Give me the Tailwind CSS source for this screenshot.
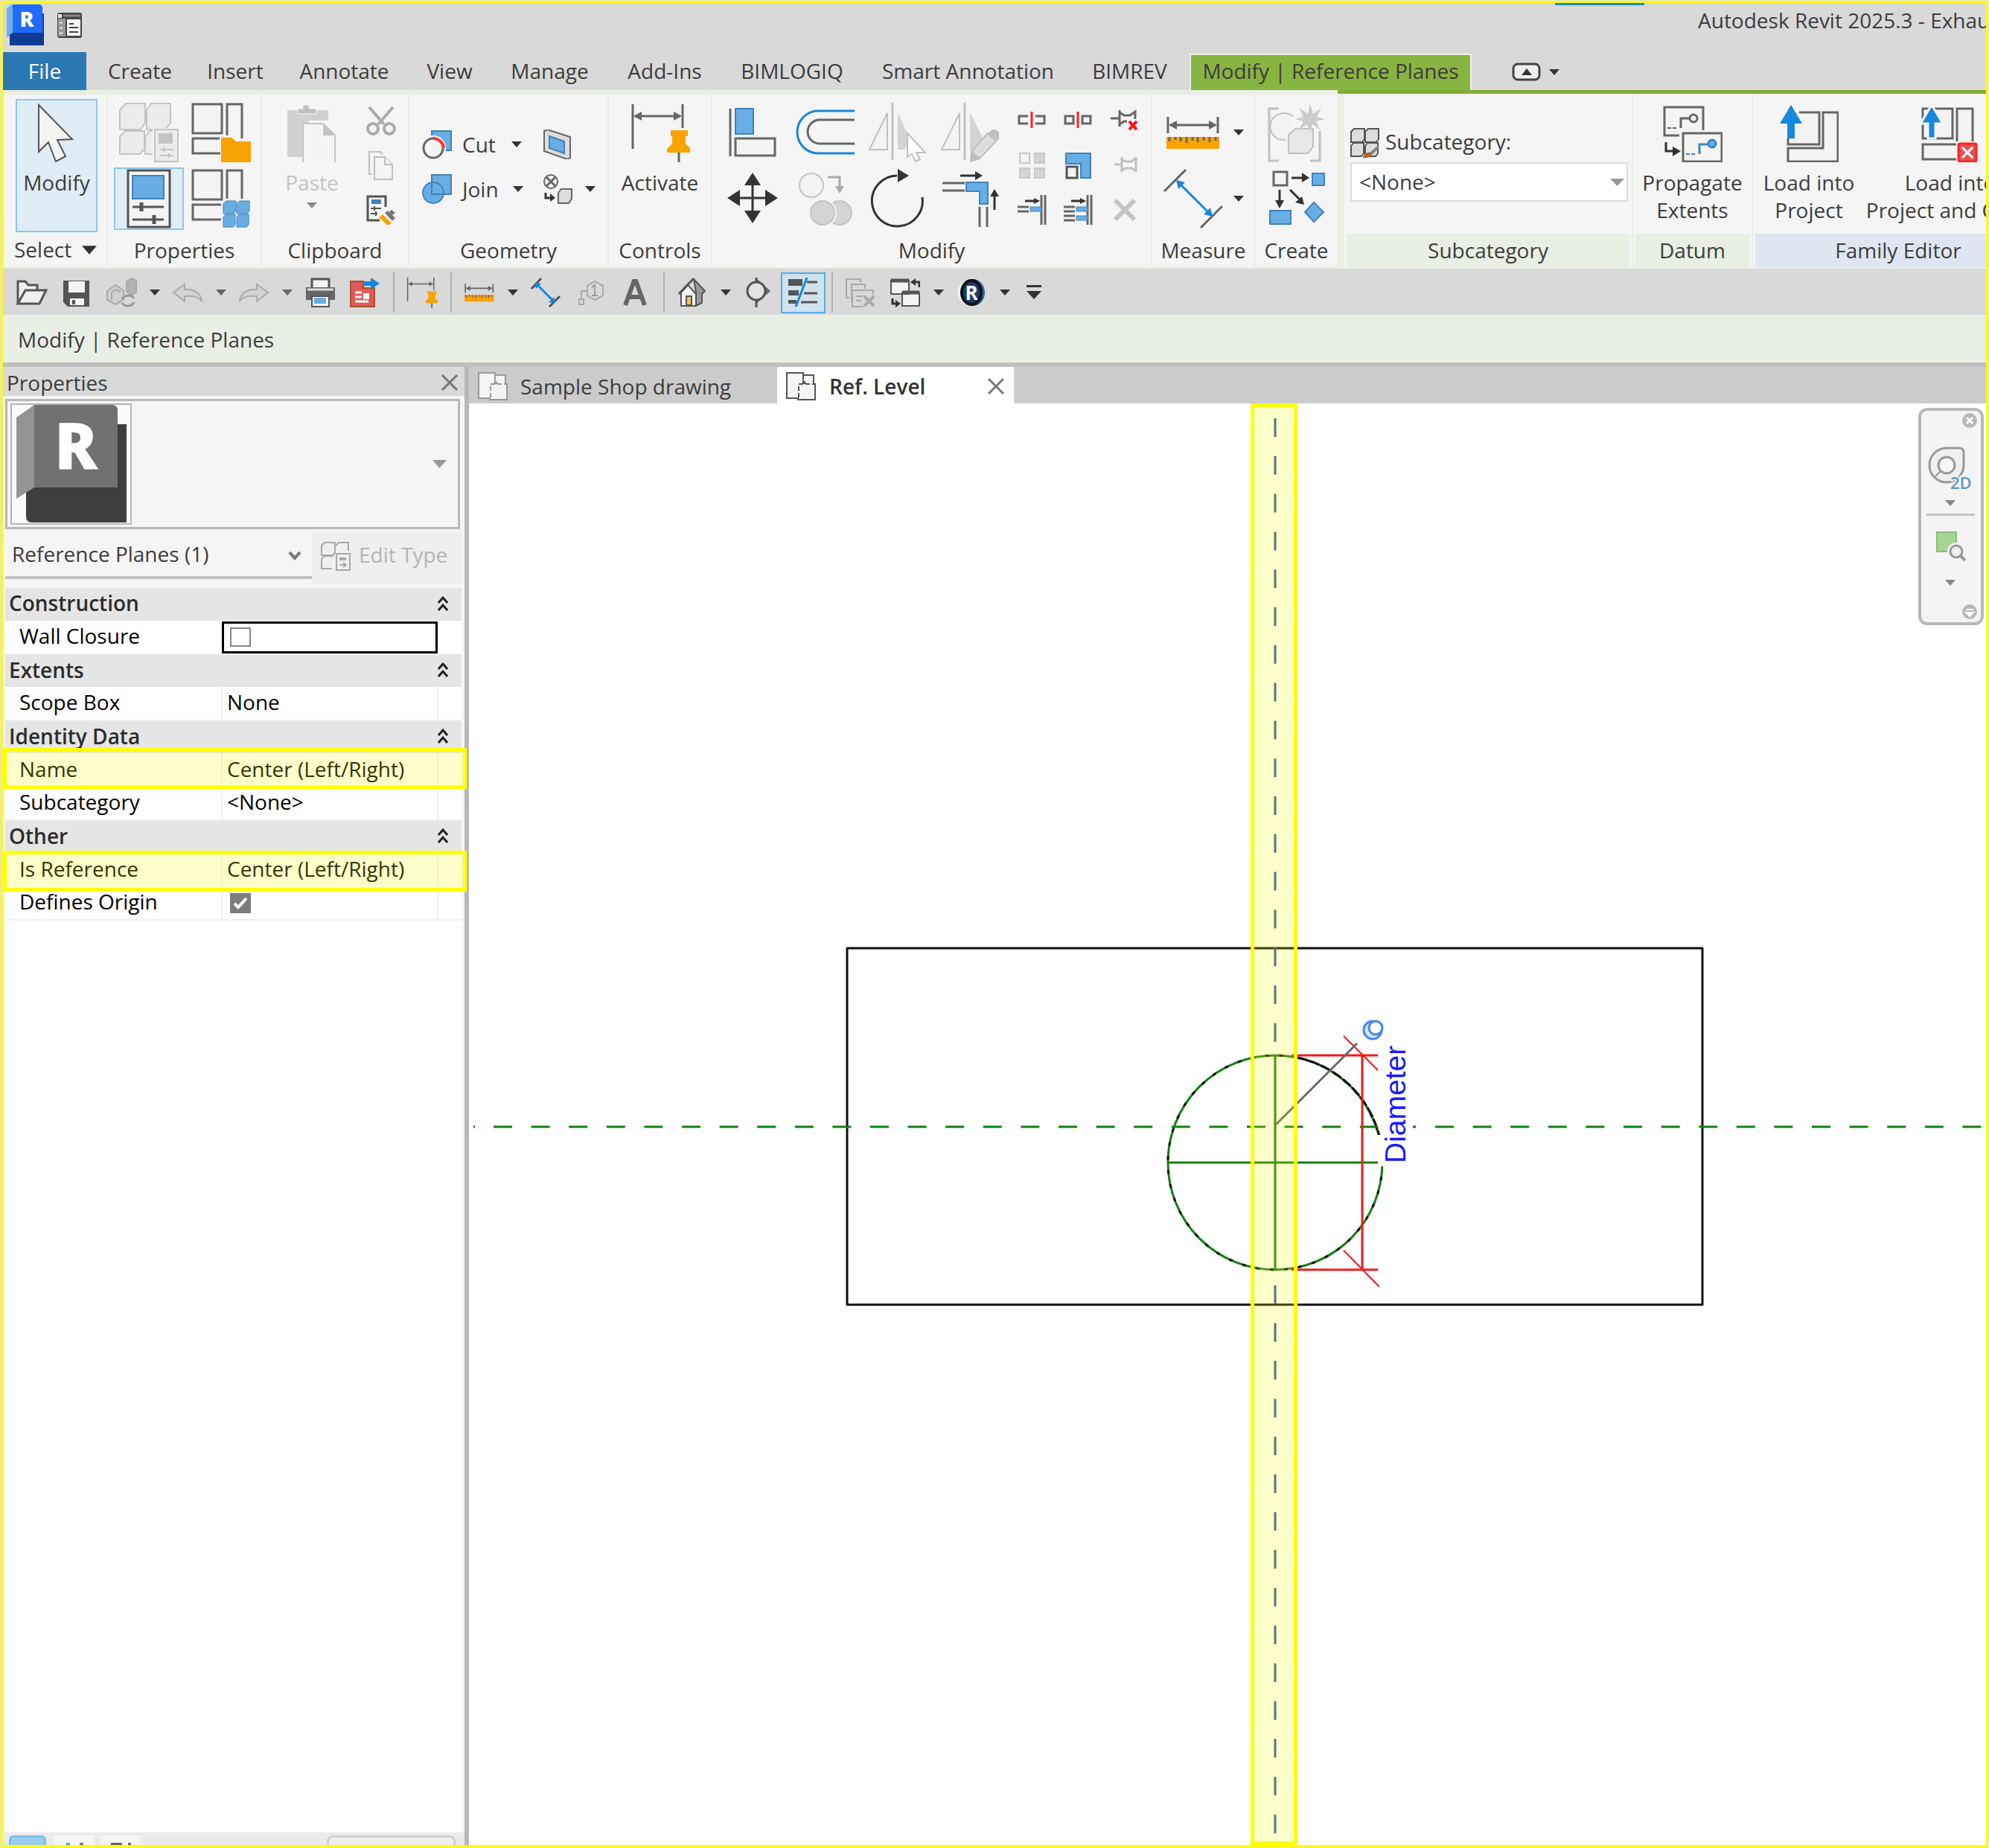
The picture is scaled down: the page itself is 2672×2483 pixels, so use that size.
<!DOCTYPE html>
<html lang="en">
<head>
    <meta charset="UTF-8">
    <meta name="viewport" content="width=device-width, initial-scale=1.0">
    <title>Autodesk Revit 2025.3</title>
    <script src="https://cdn.jsdelivr.net/npm/@tailwindcss/browser@4"></script>
</head>
<body class="bg-[#e0e0e0] text-[28px] leading-[37px] text-[#3c3c3c] font-['Open_Sans','Noto_Sans',sans-serif]">

    <!-- Shared symbols -->
    <svg class="hidden" aria-hidden="true">
        <symbol id="caret" viewBox="0 0 14 8"><path d="M0 0h14L7 8z" fill="currentColor"/></symbol>
        <symbol id="collapse" viewBox="0 0 14 22"><path d="M1 10l6-7 6 7M1 20l6-7 6 7" fill="none" stroke="#222" stroke-width="3"/></symbol>
        <symbol id="close" viewBox="0 0 24 24"><path d="M2 2l20 20M22 2L2 22" fill="none" stroke="#777" stroke-width="3"/></symbol>
        <symbol id="sheet" viewBox="0 0 40 40">
            <path d="M1 2h22v34H1z" fill="#f4f4f2" stroke="currentColor" stroke-width="2"/>
            <path d="M16 38V17h7V5h14v12h2v21z" fill="#f4f4f2"/>
            <path d="M23 5h14v12h2v21H16v-3M23 5v7" fill="none" stroke="currentColor" stroke-width="2"/>
            <path d="M17 35V17h20" fill="none" stroke="currentColor" stroke-width="2" stroke-dasharray="6 3"/>
            <path d="M20 17l4-5 4 5z" fill="currentColor"/>
        </symbol>
        <symbol id="pinned-dim" viewBox="0 0 80 80">
            <path d="M3 2v60M70 2v32M6 18h60" fill="none" stroke="#666" stroke-width="3"/>
            <path d="M4 18l11-6v12zM69 18l-11-6v12z" fill="#666"/>
            <path d="M54 37h23v8h-3v10l7 7v5H49v-5l7-7V45h-2z" fill="#f8a300"/>
            <path d="M65 67v14" stroke="#666" stroke-width="3"/>
        </symbol>
        <symbol id="aligned-dim" viewBox="0 0 80 80">
            <path d="M1 30L30 1M50 79l29-29" stroke="#666" stroke-width="3"/>
            <path d="M20 18l44 44" stroke="#1787e0" stroke-width="3"/>
            <path d="M17 15l12 3-9 9zM66 64l-12-3 9-9z" fill="#1787e0"/>
        </symbol>
        <symbol id="ruler" viewBox="0 0 72 44">
            <path d="M2 1v22M69 1v22M5 12h60" stroke="#666" stroke-width="3"/>
            <path d="M3 12l11-6v12zM68 12l-11-6v12z" fill="#666"/>
            <path d="M0 28h71v16H0z" fill="#f8a300"/>
            <path d="M4 28v6M12 28v4M19 28v6M27 28v8M35 28v5M42 28v7M50 28v5M58 28v7M66 28v5" stroke="#666" stroke-width="3"/>
        </symbol>
        <symbol id="cubes" viewBox="0 0 40 40">
            <path d="M1 5l4-4h14v14l-3 4H1zM20 5l4-4h14v14l-3 4H20zM1 24l3-4h14v14l-3 4H1zM20 24l3-4h14v14l-3 4H20z"/>
        </symbol>
    </svg>

    <div class="p-px">
    <div class="flex min-h-[calc(100vh-2px)] flex-col border-[3px] border-[#ffff00]">

        <!-- Title bar -->
        <header class="flex h-[66px] overflow-hidden bg-[#d9d9d9]">
            <svg class="ml-[5px] mt-[2px] shrink-0" width="52" height="56" viewBox="0 0 52 56">
                <path d="M0 5l8-5v40l-8 4z" fill="#4f9fe0"/>
                <path d="M4 12h46v43H4z" fill="#0f3c92"/>
                <path d="M8 0h37l3 3v35H8z" fill="#1f6bff"/>
                <path d="M0 5l8-5v38l-8 5z" fill="#6db0e6"/>
                <text x="27" y="30" text-anchor="middle" font-size="28" font-weight="800" fill="#fff">R</text>
            </svg>
            <button class="ml-[14px] mt-[11px] h-[38px]" aria-label="Home">
                <svg width="38" height="38" viewBox="0 0 38 38">
                    <rect x="2" y="2" width="33" height="34" rx="3" fill="#444"/>
                    <path d="M3 10h10v24H3z" fill="#999"/>
                    <path d="M15 11h18v22H15z" fill="#f5f5f5"/>
                    <path d="M3 4h5v5H3z" fill="#d8eafa"/>
                    <path d="M10 6h23" stroke="#888" stroke-width="3"/>
                    <path d="M5 14h4v3H5zM5 21h4v3H5zM5 28h4v3H5z" fill="#ccc"/>
                    <path d="M18 17h6M18 22h12M18 28h12" stroke="#444" stroke-width="2"/>
                </svg>
            </button>
            <div class="ml-auto h-[3px] w-[120px] shrink-0 bg-[#1787e0]"></div>
            <h1 class="ml-[72px] mt-[5px] w-[387px] shrink-0 whitespace-nowrap">Autodesk Revit 2025.3 - Exhau</h1>
        </header>

        <!-- Ribbon tabs -->
        <nav class="flex h-[51px] items-stretch whitespace-nowrap bg-[#d9d9d9]">
            <button class="w-[112px] bg-[#2b78b3] text-white">File</button>
            <button class="ml-[5px] w-[134px]">Create</button>
            <button class="w-[122px]">Insert</button>
            <button class="w-[171px]">Annotate</button>
            <button class="w-[112px]">View</button>
            <button class="w-[157px]">Manage</button>
            <button class="w-[152px]">Add-Ins</button>
            <button class="w-[190px]">BIMLOGIQ</button>
            <button class="w-[283px]">Smart Annotation</button>
            <button class="w-[151px]">BIMREV</button>
            <button class="ml-[5px] mt-[2px] w-[379px] border-x-2 border-t-2 border-[#eef3e8] bg-[#88b441] pb-[4px]">Modify | Reference Planes</button>
            <button class="ml-[54px] flex items-center gap-[10px] pt-[2px] text-[#333]" aria-label="Minimize ribbon">
                <svg width="40" height="26" viewBox="0 0 40 26"><rect x="2" y="2" width="35" height="21" rx="6" fill="#eee" stroke="#444" stroke-width="3"/><path d="M13 17l7-9 7 9z" fill="#333"/></svg>
                <svg width="14" height="8"><use href="#caret"/></svg>
            </button>
        </nav>
        <div class="flex h-[6px] bg-[#e9efe3]">
            <div class="w-[1793px]"></div>
            <div class="mb-px flex-1 bg-[#7fae36]"></div>
        </div>

        <!-- Ribbon panels -->
        <section class="flex h-[234px] gap-[2px] overflow-hidden bg-[#e9efe3] pb-[2px] pl-[2px]">
            <div class="flex w-[137px] shrink-0 flex-col bg-[#f5f5f5]">
                <button class="ml-[15px] mt-[6px] flex h-[179px] w-[110px] flex-col items-center border-2 border-[#8cc8ee] bg-[#deedf6] pt-[3px]">
                    <svg width="80" height="80" viewBox="0 0 80 80"><path d="M16 5l45 46-20 1 11 22-13 7-10-26-13 13z" fill="#f4f4f2" stroke="#555" stroke-width="2" transform="translate(0 -2)"/></svg>
                    <span class="mt-[9px]">Modify</span>
                </button>
                <button class="flex h-[47px] items-center gap-[14px] pl-[13px]">Select <svg class="text-[#333]" width="20" height="12"><use href="#caret"/></svg></button>
            </div>

            <div class="flex w-[205px] shrink-0 flex-col bg-[#f5f5f5]">
                <div class="grid h-[187px] grid-cols-[94px_80px] content-start justify-items-center gap-x-[10px] gap-y-[5px] pl-[8px] pt-[9px]">
                    <button class="h-[84px]" aria-label="Type Properties">
                        <svg width="80" height="80" viewBox="0 0 80 80" fill="#ececec" stroke="#c4c4c4" stroke-width="2">
                            <path d="M1 10l8-9h26v26l-6 9H1zM37 10l6-9h26v26l-7 9H37zM1 46l7-8h26v24l-6 7H1zM35 46l6-8h24v24l-6 7H35z"/>
                            <path d="M45 34h35v46H45z" fill="#f5f5f5" stroke="none"/>
                            <path d="M48 36h31v43H48z"/>
                            <path d="M53 41h19v14H53z" fill="#c4c4c4" stroke="none"/>
                            <path d="M55 63h18M60 60v6M55 71h18M67 68v6"/>
                        </svg>
                    </button>
                    <button class="h-[84px]" aria-label="Family Category">
                        <svg width="80" height="80" viewBox="0 0 80 80" fill="#f4f4f2" stroke="#666" stroke-width="3">
                            <path d="M2 2h39v39H2zM48 44V2h20v46M38 48H2v20h37"/>
                            <path d="M40 47h14l6 5h20v28H40z" fill="#f8a300" stroke="none"/>
                        </svg>
                    </button>
                    <button class="flex h-[84px] w-[94px] items-center justify-center border-2 border-[#8cc8ee] bg-[#deedf6]" aria-label="Properties">
                        <svg width="60" height="80" viewBox="0 0 60 80">
                            <path d="M2 2h56v76H2z" fill="#f4f4f2" stroke="#555" stroke-width="3"/>
                            <path d="M8 9h42v31H8z" fill="#68aee5" stroke="#3f83bd" stroke-width="2"/>
                            <path d="M8 51h42M8 68h42" stroke="#555" stroke-width="3"/>
                            <path d="M20 45v12M37 62v12" stroke="#555" stroke-width="5"/>
                        </svg>
                    </button>
                    <button class="h-[84px]" aria-label="Family Types">
                        <svg width="80" height="80" viewBox="0 0 80 80" fill="#f4f4f2" stroke="#666" stroke-width="3">
                            <path d="M2 2h39v39H2zM48 40V2h20v38M40 48H2v20h38"/>
                            <g fill="#68aee5" stroke="#3f83bd" stroke-width="1"><use href="#cubes" x="41" y="42" width="40" height="38"/></g>
                        </svg>
                    </button>
                </div>
                <div class="flex h-[45px] items-center justify-center">Properties</div>
            </div>

            <div class="flex w-[196px] shrink-0 flex-col bg-[#f5f5f5]">
                <div class="flex h-[187px] gap-[25px] pl-[19px]">
                    <button class="flex w-[96px] flex-col items-center pt-[11px] text-[#c4c4c4]">
                        <svg width="80" height="80" viewBox="0 0 80 80">
                            <path d="M7 10h55v14h-26v49H7z" fill="#d0d2d1"/>
                            <path d="M28 3h8v5h10v7H21V8h7z" fill="#c0c0c0" stroke="#f5f5f5"/>
                            <path d="M28 28h27l16 16v37H28z" fill="#f4f4f2" stroke="#c4c4c4" stroke-width="2"/>
                            <path d="M55 28v16h16z" fill="#c4c4c4"/>
                        </svg>
                        <span class="mt-[9px]">Paste</span>
                        <svg class="mt-[8px] text-[#888]" width="14" height="8"><use href="#caret"/></svg>
                    </button>
                    <div class="flex flex-col gap-[20px] pt-[15px]">
                        <button class="h-[40px]" aria-label="Cut to Clipboard"><svg width="40" height="40" viewBox="0 0 40 40" fill="none" stroke="#aaa" stroke-width="4"><path d="M4 2l20 23M36 2L16 25"/><circle cx="9" cy="31" r="7"/><circle cx="31" cy="31" r="7"/></svg></button>
                        <button class="h-[40px]" aria-label="Copy to Clipboard"><svg width="40" height="40" viewBox="0 0 40 40" fill="#f4f4f2" stroke="#c0c0c0" stroke-width="2"><path d="M8 32H4V2h15l3 3"/><path d="M11 9h14l10 10v20H11z"/><path d="M25 9v10h10"/></svg></button>
                        <button class="h-[40px]" aria-label="Match Type Properties"><svg width="40" height="40" viewBox="0 0 40 40"><path d="M26 16V2H2v32h16" fill="none" stroke="#555" stroke-width="3"/><path d="M7 6h13v6H7z" fill="#3f83bd"/><path d="M6 18h14M6 25h9M11 15v6M13 22v6" stroke="#555" stroke-width="2"/><path d="M22 26l12 12-5 3-12-11z" fill="#f8a300"/><path d="M25 24l4-3 1 2 4-3 5 4-4 3 4 4-4 4z" fill="#777"/></svg></button>
                    </div>
                </div>
                <div class="flex h-[45px] items-center justify-center">Clipboard</div>
            </div>

            <div class="flex w-[266px] shrink-0 flex-col bg-[#f5f5f5]">
                <div class="flex h-[187px] flex-col gap-[20px] pl-[17px] pt-[47px]">
                    <div class="flex h-[40px] items-center">
                        <button class="flex w-[120px] items-center gap-[14px]">
                            <svg width="40" height="40" viewBox="0 0 40 40"><path d="M13 2h26v26H13z" fill="#68aee5" stroke="#3f83bd" stroke-width="2"/><circle cx="15" cy="25" r="17" fill="#f5f5f5"/><circle cx="15" cy="25" r="13" fill="#f4f4f2" stroke="#666" stroke-width="3"/><path d="M15 12a14 14 0 0 1 14 13" fill="none" stroke="#f33" stroke-width="4"/></svg>
                            Cut
                        </button>
                        <button class="w-[42px]" aria-label="Cut options"><svg class="text-[#333]" width="14" height="8"><use href="#caret"/></svg></button>
                        <button aria-label="Wall Opening"><svg width="40" height="40" viewBox="0 0 40 40"><path d="M2 2l4-2 31 10v28l-4 2L2 29z" fill="#ddd" stroke="#666" stroke-width="2"/><path d="M9 9l20 7v16L9 25z" fill="#68aee5" stroke="#3f83bd" stroke-width="2"/></svg></button>
                    </div>
                    <div class="flex h-[40px] items-center">
                        <button class="flex w-[122px] items-center gap-[14px]">
                            <svg width="40" height="40" viewBox="0 0 40 40" fill="#68aee5" stroke="#3f83bd" stroke-width="2"><path d="M13 1h26v26H13z"/><circle cx="15" cy="25" r="14"/><path d="M13 12v15h16" fill="none"/></svg>
                            Join
                        </button>
                        <button class="w-[40px]" aria-label="Join options"><svg class="text-[#333]" width="14" height="8"><use href="#caret"/></svg></button>
                        <button aria-label="Paint"><svg width="40" height="40" viewBox="0 0 40 40"><circle cx="11" cy="10" r="9" fill="none" stroke="#666" stroke-width="2"/><path d="M5 4l12 12M17 4L5 16" stroke="#666" stroke-width="3"/><path d="M4 25v7h9" fill="none" stroke="#333" stroke-width="3"/><path d="M10 26l7 6-7 5z" fill="#333"/><path d="M21 25l4-5h14v13l-4 6H21z" fill="#ddd" stroke="#666" stroke-width="2"/></svg></button>
                        <button class="ml-[17px]" aria-label="Paint options"><svg class="text-[#333]" width="14" height="8"><use href="#caret"/></svg></button>
                    </div>
                </div>
                <div class="flex h-[45px] items-center justify-center">Geometry</div>
            </div>

            <div class="flex w-[137px] shrink-0 flex-col bg-[#f5f5f5]">
                <button class="flex h-[187px] flex-col items-center pt-[11px]">
                    <svg width="80" height="80"><use href="#pinned-dim"/></svg>
                    <span class="mt-[9px]">Activate</span>
                </button>
                <div class="flex h-[45px] items-center justify-center">Controls</div>
            </div>

            <div class="flex w-[589px] shrink-0 flex-col bg-[#f5f5f5]">
                <div class="flex h-[187px] gap-[24px] pl-[14px]">
                    <div class="grid grid-cols-[80px_80px_80px_80px] content-start gap-x-[17px] gap-y-[9px] pt-[11px]">
                        <button class="h-[80px]" aria-label="Align"><svg width="80" height="80" viewBox="0 0 80 80"><path d="M10 8v64" stroke="#666" stroke-width="3"/><path d="M17 8h24v34H17z" fill="#68aee5" stroke="#3f83bd" stroke-width="2"/><path d="M17 48h53v23H17z" fill="#f4f4f2" stroke="#666" stroke-width="3"/></svg></button>
                        <button class="h-[80px]" aria-label="Offset"><svg width="80" height="80" viewBox="0 0 80 80" fill="none" stroke-width="3"><path d="M80 11H31a28 28.500 0 0 0 0 57h49" stroke="#1787e0"/><path d="M80 23H33a16 16 0 0 0 0 32h47" stroke="#666"/></svg></button>
                        <button class="h-[80px]" aria-label="Mirror Pick Axis"><svg width="80" height="80" viewBox="0 0 80 80" stroke="#c0c0c0" stroke-width="2"><path d="M3 63l24-49v49z" fill="#f4f4f2"/><path d="M34 0v77" stroke-width="3"/><path d="M41 13l17 38-8 12h-9z" fill="#d4d4d4" stroke="none"/><path d="M54 41l24 26-12 0 5 9-6 3-5-10-6 4z" fill="#fff"/></svg></button>
                        <button class="h-[80px]" aria-label="Mirror Draw Axis"><svg width="80" height="80" viewBox="0 0 80 80" stroke="#c0c0c0" stroke-width="2"><path d="M3 63l24-49v49z" fill="#f4f4f2"/><path d="M34 0v77" stroke-width="3"/><path d="M41 13l17 34-14 16h-3z" fill="#d4d4d4" stroke="none"/><path d="M43 78l2-15 20-22 11 11-21 22z" fill="#ddd"/><path d="M67 41a7 7 0 1 1 10 9zM42 79l1-14 11 10z" fill="#c0c0c0"/></svg></button>
                        <button class="h-[80px]" aria-label="Move"><svg width="80" height="80" viewBox="0 0 80 80" fill="#333"><path d="M40 15v46M16 39h48" stroke="#333" stroke-width="3"/><path d="M40 5l11 17H29zM40 73l11-17H29zM6 39l17-11v22zM74 39L57 28v22z"/></svg></button>
                        <button class="h-[80px]" aria-label="Copy"><svg width="80" height="80" viewBox="0 0 80 80" fill="#d4d4d4" stroke="#c4c4c4" stroke-width="2"><circle cx="22" cy="22" r="16" fill="#f4f4f2"/><circle cx="60" cy="59" r="16"/><circle cx="37" cy="59" r="18" stroke="#f5f5f5"/><circle cx="37" cy="59" r="16"/><path d="M44 11h16v12" fill="none" stroke="#aaa" stroke-width="3"/><path d="M54 23h12l-6 10z" fill="#aaa" stroke="none"/></svg></button>
                        <button class="h-[80px]" aria-label="Rotate"><svg width="80" height="80" viewBox="0 0 80 80"><path d="M40 9A34 34 0 1 0 74 38" fill="none" stroke="#333" stroke-width="3"/><path d="M41 0l15 9-15 9z" fill="#333"/></svg></button>
                        <button class="h-[80px]" aria-label="Trim to Corner"><svg width="80" height="80" viewBox="0 0 80 80"><path d="M4 19h30M4 29h30M54 51v27M64 51v27" stroke="#666" stroke-width="3"/><path d="M36 18h29v29H54V30H36z" fill="#68aee5" stroke="#3f83bd" stroke-width="2"/><path d="M28 9h22M74 55V35" stroke="#333" stroke-width="3"/><path d="M48 3l10 6-10 6zM68 37l6-10 6 10z" fill="#333"/></svg></button>
                    </div>
                    <div class="grid grid-cols-[40px_40px_40px] content-start gap-x-[22px] gap-y-[20px] pt-[15px]">
                        <button class="h-[40px]" aria-label="Split Element"><svg width="40" height="40" viewBox="0 0 40 40"><path d="M15 14H3v10h12M25 14h12v10H25" fill="none" stroke="#666" stroke-width="3"/><path d="M20 8v22" stroke="#f22" stroke-width="3"/></svg></button>
                        <button class="h-[40px]" aria-label="Split with Gap"><svg width="40" height="40" viewBox="0 0 40 40"><path d="M3 14h11v10H3zM26 14h11v10H26z" fill="none" stroke="#666" stroke-width="3"/><path d="M20 8v22" stroke="#f22" stroke-width="3"/></svg></button>
                        <button class="h-[40px]" aria-label="Unpin"><svg width="40" height="40" viewBox="0 0 40 40"><path d="M2 17h11M14 6v22M14 9l6 4h8l7-5v10M14 25l6-4h4" fill="none" stroke="#666" stroke-width="3"/><path d="M27 21l10 11M37 21L27 32" stroke="#f11" stroke-width="4"/></svg></button>
                        <button class="h-[40px]" aria-label="Array"><svg width="40" height="40" viewBox="0 0 40 40" fill="#d4d4d4" stroke="#c8c8c8" stroke-width="2"><path d="M4 4h13v13H4z" fill="#f4f4f2"/><path d="M24 4h13v13H24zM4 24h13v13H4zM24 24h13v13H24z"/></svg></button>
                        <button class="h-[40px]" aria-label="Scale"><svg width="40" height="40" viewBox="0 0 40 40"><path d="M4 4h33v33H24V18H4z" fill="#68aee5" stroke="#3f83bd" stroke-width="2"/><path d="M5 22h14v15H5z" fill="#f4f4f2" stroke="#555" stroke-width="3"/></svg></button>
                        <button class="h-[40px]" aria-label="Pin"><svg width="40" height="40" viewBox="0 0 40 40"><path d="M7 19h9M17 9v20M17 12l5 3h8l6-4M17 27l5-3h8l6 3M36 9v20" fill="none" stroke="#c0c0c0" stroke-width="3"/></svg></button>
                        <button class="h-[40px]" aria-label="Trim Single"><svg width="40" height="40" viewBox="0 0 40 40"><path d="M1 16h15M1 22h15M33 0v40M38 0v40" stroke="#666" stroke-width="3"/><path d="M18 16h15v6H18z" fill="#68aee5" stroke="#3f83bd"/><path d="M11 8h14" stroke="#333" stroke-width="3"/><path d="M23 4l8 4-8 4z" fill="#333"/></svg></button>
                        <button class="h-[40px]" aria-label="Trim Multiple"><svg width="40" height="40" viewBox="0 0 40 40"><path d="M1 16h15M1 22h15M1 28h15M1 34h15M33 0v40M38 0v40" stroke="#666" stroke-width="3"/><path d="M18 16h15v6H18zM18 28h15v6H18z" fill="#68aee5" stroke="#3f83bd"/><path d="M11 8h14" stroke="#333" stroke-width="3"/><path d="M23 4l8 4-8 4z" fill="#333"/></svg></button>
                        <button class="h-[40px]" aria-label="Delete"><svg width="40" height="40" viewBox="0 0 40 40"><path d="M8 7l26 26M34 7L8 33" stroke="#c4c4c4" stroke-width="6"/></svg></button>
                    </div>
                </div>
                <div class="flex h-[45px] items-center justify-center">Modify</div>
            </div>

            <div class="flex w-[137px] shrink-0 flex-col bg-[#f5f5f5]">
                <div class="flex h-[187px] flex-col gap-[9px] pl-[15px] pt-[11px]">
                    <button class="flex h-[80px] items-center gap-[14px]" aria-label="Measure">
                        <svg width="80" height="44"><use href="#ruler"/></svg>
                        <svg class="text-[#333]" width="14" height="8"><use href="#caret"/></svg>
                    </button>
                    <button class="flex h-[80px] items-center gap-[14px]" aria-label="Aligned Dimension">
                        <svg width="80" height="80"><use href="#aligned-dim"/></svg>
                        <svg class="text-[#333]" width="14" height="8"><use href="#caret"/></svg>
                    </button>
                </div>
                <div class="flex h-[45px] items-center justify-center">Measure</div>
            </div>

            <div class="flex w-[109px] shrink-0 flex-col bg-[#f5f5f5]">
                <div class="flex h-[187px] flex-col items-center gap-[9px] pt-[11px]">
                    <button class="h-[80px]" aria-label="Create Group"><svg width="80" height="80" viewBox="0 0 80 80" fill="none" stroke="#c0c0c0" stroke-width="3"><path d="M16 8H3v70h13M58 78h13V38"/><path d="M35 18a19 18 0 1 0-10 32" stroke-width="2" fill="#f2f2f0"/><path d="M29 43l9-8h24v24l-7 9H29z" stroke-width="2" fill="#e8e8e8"/><path d="M58 1l4 14 11-8-6 12 11 3-12 3 6 12-11-8-3 12-4-12-11 7 6-11-12-3 12-3-6-12 12 8z" fill="#ccc" stroke="none"/></svg></button>
                    <button class="h-[80px]" aria-label="Create Similar"><svg width="80" height="80" viewBox="0 0 80 80"><path d="M9 4h18v18H9z" fill="#f4f4f2" stroke="#666" stroke-width="3"/><path d="M61 6h16v16H61zM4 56h28v18H4zM63 45l13 13-13 13-12-13z" fill="#68aee5" stroke="#3f83bd" stroke-width="2"/><path d="M33 12h16M17 28v16M31 28l14 14" stroke="#333" stroke-width="3"/><path d="M47 5l10 7-10 6zM11 42h12l-6 11zM50 48l-12-3 9-8z" fill="#333"/></svg></button>
                </div>
                <div class="flex h-[45px] items-center justify-center">Create</div>
            </div>

            <div class="ml-[8px] flex w-[386px] shrink-0 flex-col bg-[#f5f5f5]">
                <div class="h-[187px] pl-[8px] pt-[45px]">
                    <label for="subcategory" class="flex h-[46px] items-start gap-[7px]">
                        <svg width="40" height="40" viewBox="0 0 40 40"><g fill="#ddd" stroke="#555" stroke-width="2"><use href="#cubes" width="40" height="40"/></g><path d="M38 25L26 36" stroke="#888" stroke-width="4"/><path d="M17 40c1-7 8-8 12-7 0 5-6 8-12 7z" fill="#b5622c"/></svg>
                        Subcategory:
                    </label>
                    <div class="relative w-[373px]">
                        <select id="subcategory" class="h-[53px] w-full appearance-none border-2 border-[#dcdcdc] bg-white pl-[10px]"><option>&lt;None&gt;</option></select>
                        <svg class="pointer-events-none absolute right-[5px] top-[22px] text-[#999]" width="19" height="10" viewBox="0 0 14 8" preserveAspectRatio="none"><path d="M0 0h14L7 8z" fill="currentColor"/></svg>
                    </div>
                </div>
                <div class="mx-[3px] flex h-[45px] items-center justify-center bg-[#e9efe3]">Subcategory</div>
            </div>

            <div class="flex w-[159px] shrink-0 flex-col bg-[#f5f5f5]">
                <button class="flex h-[187px] flex-col items-center pt-[11px]">
                    <svg width="80" height="80" viewBox="0 0 80 80" fill="#f4f4f2" stroke="#666" stroke-width="3"><path d="M22 44H2V6h52v31"/><path d="M27 41h52v38H27z"/><path d="M6 34h14" stroke-width="2" stroke-dasharray="5 2"/><path d="M24 34V21h12"/><circle cx="41" cy="21" r="5"/><path d="M31 69h13" stroke="#3f83bd" stroke-dasharray="5 2" stroke-width="2"/><path d="M49 69V56h12" fill="none" stroke="#3f83bd"/><circle cx="66" cy="55" r="5" fill="#68aee5" stroke="#3f83bd"/><path d="M4 53v12h10" stroke="#333" fill="none"/><path d="M13 59l11 6-11 7z" fill="#333" stroke="none"/></svg>
                    <span class="mt-[9px]">Propagate<br>Extents</span>
                </button>
                <div class="mx-[3px] flex h-[45px] items-center justify-center bg-[#e9efe3]">Datum</div>
            </div>

            <div class="flex w-[390px] shrink-0 flex-col bg-[#f5f5f5]">
                <div class="flex h-[187px]">
                    <button class="flex w-[150px] flex-col items-center pt-[11px]">
                        <svg width="80" height="80" viewBox="0 0 80 80" fill="#f4f4f2" stroke="#666" stroke-width="3"><path d="M27 13h27v43H12v-8"/><path d="M59 13h20v66H12V61h47z"/><path d="M16 3l15 25H21v20H11V28H1z" fill="#1787e0" stroke="none"/></svg>
                        <span class="mt-[9px]">Load into<br>Project</span>
                    </button>
                    <button class="flex w-[230px] flex-col items-center whitespace-nowrap pt-[11px]">
                        <svg width="80" height="80" viewBox="0 0 80 80" fill="#f4f4f2" stroke="#666" stroke-width="3"><path d="M3 8h40v40H3zM49 52V8h21v44M48 56H3v20h45"/><path d="M15 3l15 25H20v20H10V28H0z" fill="#1787e0" stroke="#f5f5f5"/><rect x="51" y="55" width="24" height="24" rx="2" fill="#e25555" stroke="#f22"/><path d="M56 60l14 14M70 60L56 74" stroke="#fff"/></svg>
                        <span class="mt-[9px]">Load into<br>Project and Close</span>
                    </button>
                </div>
                <div class="mx-[3px] flex h-[45px] items-center justify-center bg-[#dfe6f1]">Family Editor</div>
            </div>
        </section>

        <!-- Quick access toolbar -->
        <section class="flex h-[62px] items-center bg-[#d9d9d9] pl-[9px] pt-[2px] text-[#333]">
            <button class="flex w-[60px] justify-center" aria-label="Open"><svg width="42" height="40" viewBox="0 0 42 40" fill="#f0f0f0" stroke="#555" stroke-width="3"><path d="M2 35V5h10l4 5h12v7"/><path d="M2 35l10-18h28L31 35z"/></svg></button>
            <button class="flex w-[60px] justify-center" aria-label="Save"><svg width="40" height="40" viewBox="0 0 40 40"><path d="M2 4h35v35H8l-6-6z" fill="#555"/><path d="M9 5h22v15H9z" fill="#f4f4f2"/><path d="M11 28h19v9H11z" fill="#f4f4f2"/><path d="M14 30h4v6h-4z" fill="#555"/></svg></button>
            <button class="flex w-[60px] justify-center" aria-label="Synchronize"><svg width="42" height="40" viewBox="0 0 42 40" fill="#d0d0d0" stroke="#aaa" stroke-width="2"><path d="M2 18l11-8 11 7v13l-11 6-11-6z"/><path d="M8 30V20l6-4 6 3" /><path d="M28 5l7-4 6 3v16l-6 3-7-4z" fill="#b4b4b4"/><path d="M22 29a9 8 0 0 1 16-1M38 33a9 8 0 0 1-16 1" fill="none" stroke="#999" stroke-width="3"/></svg></button>
            <button class="flex w-[29px] justify-center" aria-label="Synchronize options"><svg width="14" height="8"><use href="#caret"/></svg></button>
            <button class="flex w-[60px] justify-center" aria-label="Undo"><svg width="42" height="40" viewBox="0 0 42 40"><path d="M2 20L17 9v7c14-1 22 6 23 15-6-6-12-7-23-6v7z" fill="#d4d4d4" stroke="#aaa" stroke-width="2"/></svg></button>
            <button class="flex w-[29px] justify-center text-[#666]" aria-label="Undo options"><svg width="14" height="8"><use href="#caret"/></svg></button>
            <button class="flex w-[60px] justify-center" aria-label="Redo"><svg width="42" height="40" viewBox="0 0 42 40"><path d="M40 20L25 9v7C11 15 3 22 2 31c6-6 12-7 23-6v7z" fill="#d4d4d4" stroke="#aaa" stroke-width="2"/></svg></button>
            <button class="flex w-[29px] justify-center text-[#666]" aria-label="Redo options"><svg width="14" height="8"><use href="#caret"/></svg></button>
            <button class="flex w-[60px] justify-center" aria-label="Print"><svg width="40" height="40" viewBox="0 0 40 40"><path d="M9 14V2h23v12" fill="#f4f4f2" stroke="#555" stroke-width="3"/><path d="M1 13h39v17H1z" fill="#666"/><path d="M3 16h35" stroke="#ddd" stroke-width="3"/><path d="M9 25h23v14H9z" fill="#f4f4f2" stroke="#555" stroke-width="2"/><path d="M12 27h16v8H12z" fill="#68aee5"/></svg></button>
            <button class="flex w-[60px] justify-center" aria-label="Export PDF"><svg width="40" height="40" viewBox="0 0 40 40"><path d="M1 5h17v9h15v25H1z" fill="#e05a55" stroke="#a5532f" stroke-width="2"/><path d="M7 20h9M7 26h9M7 32h18" stroke="#fff" stroke-width="3"/><path d="M18 21h8v8h-8z" fill="#fff"/><path d="M18 5h10V0l12 8-12 8v-5H18z" fill="#1787e0"/></svg></button>
            <div class="flex w-[17px] justify-center"><span class="h-[54px] w-[2px] bg-[#b0b0b0]"></span></div>
            <button class="flex w-[60px] justify-center" aria-label="Activate Dimensions"><svg width="42" height="42"><use href="#pinned-dim"/></svg></button>
            <div class="flex w-[17px] justify-center"><span class="h-[54px] w-[2px] bg-[#b0b0b0]"></span></div>
            <button class="flex w-[60px] justify-center" aria-label="Measure"><svg width="40" height="26"><use href="#ruler"/></svg></button>
            <button class="flex w-[29px] justify-center" aria-label="Measure options"><svg width="14" height="8"><use href="#caret"/></svg></button>
            <button class="flex w-[60px] justify-center" aria-label="Aligned Dimension"><svg width="42" height="40" viewBox="0 0 42 40"><path d="M2 15L15 1M26 39l14-14" stroke="#555" stroke-width="3"/><path d="M9 9l22 22" stroke="#1787e0" stroke-width="3"/><path d="M6 7l9 1-7 7zM34 34l-9-1 7-7z" fill="#1787e0"/></svg></button>
            <button class="flex w-[60px] justify-center" aria-label="Tag by Category"><svg width="36" height="36" viewBox="0 0 36 36" fill="none" stroke="#aaa" stroke-width="2"><path d="M14 16H6v10M3 27h6v7H3zM24 3l11 6v13l-11 6-10-6V9z"/><path d="M20 11l4-3v14M20 22h8" stroke="#999"/></svg></button>
            <button class="flex w-[60px] justify-center" aria-label="Text"><svg width="32" height="36" viewBox="0 0 32 36"><path d="M3 35L15 2h2l12 33M7 24h18" fill="none" stroke="#666" stroke-width="6"/></svg></button>
            <div class="flex w-[17px] justify-center"><span class="h-[54px] w-[2px] bg-[#b0b0b0]"></span></div>
            <button class="flex w-[60px] justify-center" aria-label="Default 3D View"><svg width="38" height="40" viewBox="0 0 38 40" stroke="#555" stroke-width="2"><path d="M21 2l15 16-4 4v12l-8 4V20z" fill="#999"/><path d="M4 38V20l9-10 11 12v16z" fill="#f4f4f2"/><path d="M1 22L20 2" fill="none" stroke-width="3"/><path d="M11 25h7v12h-7z" fill="#f8c060"/></svg></button>
            <button class="flex w-[29px] justify-center" aria-label="3D View options"><svg width="14" height="8"><use href="#caret"/></svg></button>
            <button class="flex w-[60px] justify-center" aria-label="Section"><svg width="36" height="40" viewBox="0 0 36 40"><path d="M15 1l19 17-19 17z" fill="#666"/><circle cx="15" cy="18" r="12" fill="#e4e4e4" stroke="#555" stroke-width="3"/><path d="M15 0v6M15 30v10" stroke="#555" stroke-width="3"/></svg></button>
            <button class="flex h-[55px] w-[60px] items-center justify-center border-2 border-[#55aae6] bg-[#d0e2ec]" aria-label="Thin Lines"><svg width="42" height="40" viewBox="0 0 42 40"><path d="M1 2h19v9H1zM1 17h14v7H1zM1 30h11v5H1z" fill="#555"/><path d="M26 6h14M22 21h18M18 33h22" stroke="#555" stroke-width="3"/><path d="M26 0L11 39" stroke="#1787e0" stroke-width="3"/></svg></button>
            <div class="flex w-[17px] justify-center"><span class="h-[54px] w-[2px] bg-[#b0b0b0]"></span></div>
            <button class="flex w-[60px] justify-center" aria-label="Close Inactive Views"><svg width="40" height="40" viewBox="0 0 40 40" fill="none" stroke="#aaa" stroke-width="2"><path d="M5 27H1V2h19v4M8 33V9h18v6M24 39H9V17h28v6M14 25h9M14 31h7"/><path d="M25 25l13 13M38 25L25 38" stroke-width="4"/></svg></button>
            <button class="flex w-[60px] justify-center" aria-label="Switch Windows"><svg width="40" height="40" viewBox="0 0 40 40" fill="#f4f4f2" stroke="#555" stroke-width="2"><path d="M1 4h24v18H1zM16 20h23v18H16z"/><path d="M1 4h24M16 20h23" stroke-width="5"/><path d="M39 13V6h-7M3 28v7h5" fill="none" stroke="#333" stroke-width="3"/><path d="M34 1v10l-7-5zM7 30v10l7-5z" fill="#333" stroke="none"/></svg></button>
            <button class="flex w-[29px] justify-center" aria-label="Switch Windows options"><svg width="14" height="8"><use href="#caret"/></svg></button>
            <button class="flex w-[60px] justify-center" aria-label="BIMREV"><svg width="40" height="40" viewBox="0 0 40 40"><circle cx="18" cy="20" r="17" fill="#f0f0f0"/><ellipse cx="22" cy="20" rx="16" ry="18" fill="#2d5ea0"/><ellipse cx="20" cy="20" rx="13" ry="16" fill="#1f3c70" stroke="#111" stroke-width="4"/><text x="20" y="30" text-anchor="middle" font-size="26" font-weight="700" fill="#fff">R</text></svg></button>
            <button class="flex w-[29px] justify-center" aria-label="BIMREV options"><svg width="14" height="8"><use href="#caret"/></svg></button>
            <button class="flex w-[50px] justify-center" aria-label="Customize toolbar"><svg width="22" height="20" viewBox="0 0 22 20"><path d="M1 0h20v3H1zM1 8h20L11 19z" fill="#333"/></svg></button>
        </section>

        <!-- Options bar -->
        <section class="flex h-[64px] items-center bg-[#e9efe5] pl-[20px] pt-[3px]">Modify | Reference Planes</section>
        <div class="h-[6px] bg-[#bfbfbf]"></div>

        <main class="flex flex-1">
            <!-- Properties palette -->
            <aside class="flex w-[626px] shrink-0 flex-col border-r-[6px] border-[#b8b8b8] bg-[#f5f5f5]">
                <div class="flex h-[39px] items-center justify-between bg-[#d9d9d9] pl-[5px] pr-[8px] pt-[3px]">
                    <h2>Properties</h2>
                    <button aria-label="Close palette"><svg width="24" height="24"><use href="#close"/></svg></button>
                </div>
                <button class="ml-[3px] mr-[6px] mt-[4px] flex h-[175px] items-center justify-between border-[3px] border-[#b8b8b8] pl-[4px] pr-[15px]" aria-label="Type selector">
                    <svg width="163" height="163" viewBox="0 0 163 163">
                        <path d="M1 1h161v161H1z" fill="#fafafa" stroke="#b5b5b5" stroke-width="2"/>
                        <path d="M21 28h135v132H29q-8 0-8-8z" fill="#3e3e3e"/>
                        <path d="M8 19L32 2v111L8 128z" fill="#929494"/>
                        <path d="M32 2h104q8 0 8 8v103H32z" fill="#717171"/>
                        <text x="88" y="89" text-anchor="middle" font-size="86" font-weight="800" fill="#fff">R</text>
                    </svg>
                    <svg class="text-[#999]" width="19" height="11"><use href="#caret"/></svg>
                </button>
                <div class="mt-[4px] flex h-[70px] items-start pl-[3px] pr-1">
                    <div class="relative flex-1">
                        <select aria-label="Selection filter" class="h-[63px] w-full appearance-none border-b-4 border-[#c2c2c2] pl-[9px]"><option>Reference Planes (1)</option></select>
                        <svg class="pointer-events-none absolute right-[14px] top-[24px]" width="18" height="14" viewBox="0 0 18 14"><path d="M2 3l7 8 7-8" fill="none" stroke="#777" stroke-width="4"/></svg>
                    </div>
                    <button class="flex h-[70px] w-[201px] items-start gap-[11px] bg-[#efefef] pl-[12px] pt-[12px] text-[#b4b4b4]">
                        <svg width="40" height="40" viewBox="0 0 40 40" fill="none" stroke="#a8a8a8" stroke-width="2"><path d="M1 6l4-4h14v14l-3 3H1zM20 6l4-4h13v11M1 24l4-4h12M1 24v13h14"/><path d="M21 17h18v22H21z"/><path d="M25 22h9v4h-9z" fill="#a8a8a8" stroke="none"/><path d="M25 32h9M30 29l4 3-4 3"/></svg>
                        Edit Type
                    </button>
                </div>

                <table class="ml-[3px] mr-1 mt-[5px] table-fixed border-collapse bg-white text-black">
                    <colgroup><col><col class="w-[290px]"><col class="w-[32px]"></colgroup>
                    <tbody>
                        <tr class="h-[44px] bg-[#e5e5e5] text-[#2c2c2c]"><th colspan="2" class="p-0 pb-[3px] pl-[5px] text-left font-semibold">Construction</th><td class="p-0 pb-[3px]"><svg width="14" height="22"><use href="#collapse"/></svg></td></tr>
                        <tr class="h-[45px] border-b-2 border-[#efefef]">
                            <td class="p-0 pb-[3px] pl-[19px]"><label for="wall-closure">Wall Closure</label></td>
                            <td class="p-0"><div class="flex h-[43px] items-center border-[3px] border-black pl-[8px]"><input id="wall-closure" type="checkbox" class="h-[26px] w-[28px] appearance-none border-2 border-[#888]"></div></td>
                            <td></td>
                        </tr>
                        <tr class="h-[44px] bg-[#e5e5e5] text-[#2c2c2c]"><th colspan="2" class="p-0 pb-[3px] pl-[5px] text-left font-semibold">Extents</th><td class="p-0 pb-[3px]"><svg width="14" height="22"><use href="#collapse"/></svg></td></tr>
                        <tr class="h-[45px] border-b-2 border-[#efefef]"><td class="p-0 pb-[3px] pl-[19px]">Scope Box</td><td class="border-x-2 border-[#efefef] p-0 pb-[3px] pl-[6px]">None</td><td></td></tr>
                        <tr class="h-[44px] bg-[#e5e5e5] text-[#2c2c2c]"><th colspan="2" class="p-0 pb-[3px] pl-[5px] text-left font-semibold">Identity Data</th><td class="p-0 pb-[3px]"><svg width="14" height="22"><use href="#collapse"/></svg></td></tr>
                        <tr class="relative h-[45px]">
                            <td class="p-0 pb-[3px] pl-[19px]">Name</td><td class="border-x-2 border-[#efefef] p-0 pb-[3px] pl-[6px]">Center (Left/Right)</td>
                            <td class="p-0"><span class="absolute -bottom-[3px] -left-[3px] -right-[7px] -top-[7px] z-10 border-[5px] border-[#ffff00] bg-[#ffff00]/20"></span></td>
                        </tr>
                        <tr class="h-[45px] border-b-2 border-[#efefef]"><td class="p-0 pb-[3px] pl-[19px]">Subcategory</td><td class="border-x-2 border-[#efefef] p-0 pb-[3px] pl-[6px]">&lt;None&gt;</td><td></td></tr>
                        <tr class="h-[44px] bg-[#e5e5e5] text-[#2c2c2c]"><th colspan="2" class="p-0 pb-[3px] pl-[5px] text-left font-semibold">Other</th><td class="p-0 pb-[3px]"><svg width="14" height="22"><use href="#collapse"/></svg></td></tr>
                        <tr class="relative h-[45px]">
                            <td class="p-0 pb-[3px] pl-[19px]">Is Reference</td><td class="border-x-2 border-[#efefef] p-0 pb-[3px] pl-[6px]">Center (Left/Right)</td>
                            <td class="p-0"><span class="absolute -bottom-[7px] -left-[3px] -right-[7px] -top-[3px] z-10 border-[5px] border-[#ffff00] bg-[#ffff00]/20"></span></td>
                        </tr>
                        <tr class="h-[45px] border-b-2 border-[#efefef]">
                            <td class="p-0 pb-[3px] pl-[19px]"><label for="defines-origin">Defines Origin</label></td>
                            <td class="border-x-2 border-[#efefef] p-0 pl-[10px]">
                                <div class="relative h-[27px] w-[28px]">
                                    <input id="defines-origin" type="checkbox" checked class="block h-[27px] w-[28px] appearance-none bg-[#7c7c7c]">
                                    <svg class="pointer-events-none absolute left-[4px] top-[5px]" width="20" height="18" viewBox="0 0 20 18"><path d="M2 9l5 5L18 2" fill="none" stroke="#fff" stroke-width="4"/></svg>
                                </div>
                            </td>
                            <td></td>
                        </tr>
                    </tbody>
                </table>
                <div class="ml-[3px] mr-1 flex-1 bg-white"></div>
                <div class="flex h-[17px] items-start overflow-hidden bg-[#ebebeb] pl-[8px] pr-[12px] pt-[4px]">
                    <button class="h-[40px] w-[50px] rounded-md border-[3px] border-[#7cc0ea] bg-[#9dccee]" aria-label="Properties help"></button>
                    <button class="ml-[11px] flex h-[40px] w-[54px] justify-center gap-[13px] bg-[#f5f5f5] pt-[10px]" aria-label="Sort"><span class="h-4 w-[5px] bg-[#4aa0e0]"></span><span class="h-4 w-[5px] bg-[#777]"></span></button>
                    <button class="ml-[8px] flex h-[40px] w-[54px] justify-center gap-[8px] bg-[#f5f5f5] pt-[10px]" aria-label="Filter"><span class="h-4 w-[15px] bg-[#666]"></span><span class="h-4 w-[4px] bg-[#666]"></span></button>
                    <button class="ml-auto h-[40px] w-[173px] rounded-lg border-[3px] border-[#d2d2d2] bg-[#efefef]" aria-label="Apply"></button>
                </div>
            </aside>

            <div class="flex min-w-0 flex-1 flex-col">
                <!-- View tabs -->
                <div class="flex h-[49px] items-stretch whitespace-nowrap bg-[#cbcbcb]">
                    <button class="flex w-[414px] items-center gap-[17px] pl-[12px] pt-[3px] text-left">
                        <svg class="text-[#999]" width="40" height="40"><use href="#sheet"/></svg>
                        Sample Shop drawing
                    </button>
                    <div class="flex w-[318px] items-center bg-white pl-[12px] pr-[12px] pt-[3px] font-semibold text-[#333]">
                        <svg class="text-[#555]" width="40" height="40"><use href="#sheet"/></svg>
                        <button class="ml-[18px]">Ref. Level</button>
                        <button class="ml-auto" aria-label="Close view"><svg width="24" height="24"><use href="#close"/></svg></button>
                    </div>
                </div>

                <!-- Drawing canvas -->
                <div class="relative flex-1 overflow-hidden bg-white">
                    <svg class="absolute inset-0 h-full w-full" fill="none">
                        <path d="M508 732h1149v479H508z" stroke="#111" stroke-width="3" stroke-linejoin="round"/>
                        <circle cx="1083" cy="1020" r="144" stroke="#108010" stroke-width="3"/>
                        <circle cx="1083" cy="1020" r="144" stroke="#111" stroke-width="3" stroke-dasharray="5 14"/>
                        <path d="M1113 879a144 144 0 0 1 113 120" stroke="#111" stroke-width="3" stroke-dasharray="14 3"/>
                        <path d="M1215 983h22v42h-22z" fill="#fff"/>
                        <path d="M939 1020h282M1083 876v287" stroke="#108010" stroke-width="3"/>
                        <path d="M6 972h2" stroke="#108010" stroke-width="3"/>
                        <path d="M33 972h1187" stroke="#108010" stroke-width="3" stroke-dasharray="25 25.600"/>
                        <path d="M1268 972h4" stroke="#108010" stroke-width="3"/>
                        <path d="M1298 972h740" stroke="#108010" stroke-width="3" stroke-dasharray="25 25.600"/>
                        <path d="M1083 20v840" stroke="#26588f" stroke-width="3" stroke-dasharray="25 25.800"/>
                        <path d="M1083 1185v740" stroke="#26588f" stroke-width="3" stroke-dasharray="25 25.800"/>
                        <path d="M1105 876h116M1105 1164h116M1200 876v288" stroke="#f11a1a" stroke-width="3"/>
                        <path d="M1175 850l46 46M1175 1138l48 49" stroke="#f11a1a" stroke-width="2"/>
                        <path d="M1083 970l110-110" stroke="#666" stroke-width="3"/>
                        <g stroke="#4585f5" stroke-width="3"><circle cx="1214" cy="842" r="12" fill="#d4e8f4"/><circle cx="1218" cy="839" r="9" fill="#fff"/></g>
                        <text transform="translate(1258 1021) rotate(-90)" class="font-['Liberation_Sans',sans-serif] text-[39px]" fill="#1a1aff">Diameter</text>
                    </svg>
                    <div class="absolute bottom-0 left-[1050px] top-0 w-[63px] border-[5px] border-[#ffff00] bg-[#ffff00]/20"></div>

                    <!-- Navigation bar -->
                    <div class="absolute right-[3px] top-[6px] flex h-[292px] w-[88px] flex-col items-center rounded-xl border-4 border-[#b8b8b8] bg-[#f4f4f4] pr-[2px] text-[#888]">
                        <button class="mr-[3px] mt-[3px] self-end" aria-label="Close navigation bar"><svg width="20" height="20" viewBox="0 0 20 20"><circle cx="10" cy="10" r="10" fill="#b8b8b8"/><path d="M6 6l8 8M14 6l-8 8" stroke="#fff" stroke-width="3"/></svg></button>
                        <button class="mt-[25px]" aria-label="Steering wheel">
                            <svg width="60" height="60" viewBox="0 0 60 60"><path d="M24 2h18q6 0 6 6v17a23 23 0 1 1-24-23z" fill="#eef0f2" stroke="#999" stroke-width="3"/><circle cx="25" cy="25" r="11" fill="#f5f5f5" stroke="#999" stroke-width="3"/><path d="M17 33l-7 7" stroke="#999" stroke-width="2"/><text x="30" y="57" font-size="22" font-weight="600" fill="#5a97c8" stroke="#f4f4f4" stroke-width="4" paint-order="stroke">2D</text></svg>
                        </button>
                        <svg class="mt-[12px]" width="14" height="8"><use href="#caret"/></svg>
                        <div class="mt-[10px] h-[3px] w-[65px] bg-[#c4c4c4]"></div>
                        <button class="mt-[20px]" aria-label="Zoom in region">
                            <svg width="42" height="42" viewBox="0 0 42 42"><path d="M3 2h26v26H3z" fill="#a6d492" stroke="#8bbf78" stroke-width="2"/><circle cx="29" cy="28" r="9" fill="#eee" stroke="#f4f4f4" stroke-width="6"/><circle cx="29" cy="28" r="8" fill="#eee" stroke="#999" stroke-width="3"/><path d="M34 33l7 7" stroke="#999" stroke-width="4"/></svg>
                        </button>
                        <svg class="mt-[24px]" width="14" height="8"><use href="#caret"/></svg>
                        <button class="mb-[4px] mr-[3px] mt-auto self-end" aria-label="Customize navigation bar"><svg width="20" height="20" viewBox="0 0 20 20"><circle cx="10" cy="10" r="10" fill="#b8b8b8"/><path d="M5 7h10M5 11h10l-5 5z" fill="#fff" stroke="#fff" stroke-width="2"/></svg></button>
                    </div>
                </div>
            </div>
        </main>
    </div>
    </div>
</body>
</html>
